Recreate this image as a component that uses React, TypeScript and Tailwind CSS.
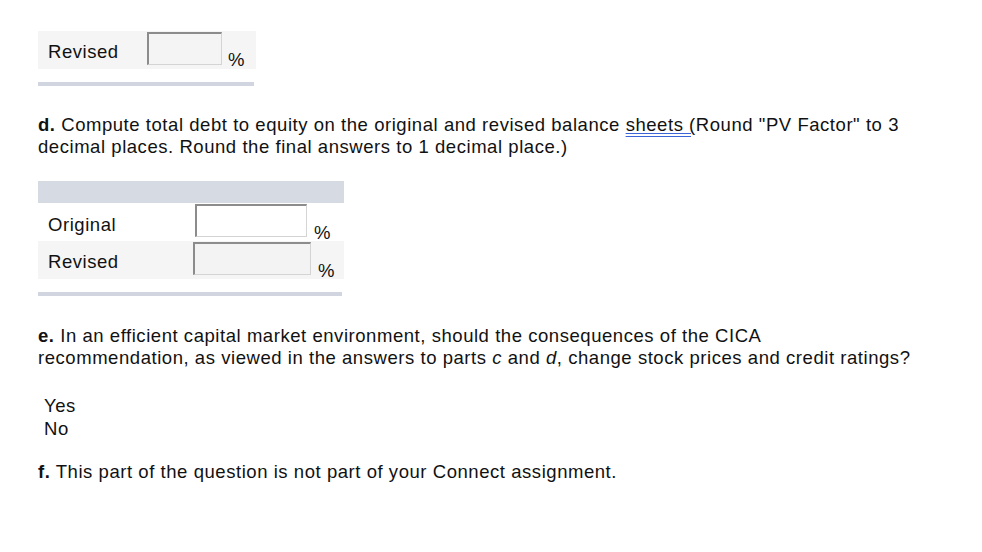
const font = { fontFamily: '"Liberation Sans", Arial, sans-serif' };

function Box({ w, bg }: { w: string; bg: string }) {
  return (
    <div
      className={`h-[33px] ${w} ${bg} border-t-2 border-l-2 border-t-[#8c8c8c] border-l-[#8c8c8c] border-b border-r border-b-[#d4d4d4] border-r-[#d4d4d4]`}
    />
  );
}

export default function App() {
  return (
    <div className="min-h-[552px] w-[982px] bg-white text-[#111] text-[18.5px] tracking-[0.55px]" style={font}>
      <div className="pl-[38px] pt-[31px]">
        {/* revised row from part c */}
        <div className="flex h-[38px] w-[218px] bg-[#f5f5f5]">
          <div className="w-[109px] pl-[10px] pt-[7px]">Revised</div>
          <div className="pt-[1px]">
            <Box w="w-[75px]" bg="bg-[#f4f4f4]" />
          </div>
          <div className="pl-[6px] pt-[15px]">%</div>
        </div>
        <div className="mt-[13px] h-[4px] w-[216px] bg-[#d1d5df]" />

        {/* part d */}
        <p className="mt-[28px] leading-[22px]">
          <b>d.</b> Compute total debt to equity on the original and revised balance{" "}
          <span className="underline decoration-double decoration-[#3b64d6] underline-offset-[2px]">sheets (</span>
          Round "PV Factor" to 3
          <br />
          decimal places. Round the final answers to 1 decimal place.)
        </p>
        <div className="mt-[23px] w-[306px]">
          <div className="h-[22px] bg-[#d6dae3]" />
          <div className="flex h-[38px] bg-white">
            <div className="w-[157px] pl-[10px] pt-[8px]">Original</div>
            <div className="pt-[1px]">
              <Box w="w-[112px]" bg="bg-white" />
            </div>
            <div className="pl-[7px] pt-[16px]">%</div>
          </div>
          <div className="flex h-[38px] bg-[#f5f5f5]">
            <div className="w-[155px] pl-[10px] pt-[7px]">Revised</div>
            <div className="pt-[1px]">
              <Box w="w-[118px]" bg="bg-[#f3f3f3]" />
            </div>
            <div className="pl-[7px] pt-[16px]">%</div>
          </div>
          <div className="mt-[13px] h-[4px] w-[304px] bg-[#d1d5df]" />
        </div>

        {/* part e */}
        <p className="mt-[29px] leading-[22px]">
          <b>e.</b> In an efficient capital market environment, should the consequences of the CICA
          <br />
          recommendation, as viewed in the answers to parts <i>c</i> and <i>d</i>, change stock prices and credit
          ratings?
        </p>
        <div className="mt-[25px] pl-[6px] leading-[23px]">
          <div>Yes</div>
          <div>No</div>
        </div>

        {/* part f */}
        <p className="mt-[21px] leading-[22px]">
          <b>f.</b> This part of the question is not part of your Connect assignment.
        </p>
      </div>
    </div>
  );
}
